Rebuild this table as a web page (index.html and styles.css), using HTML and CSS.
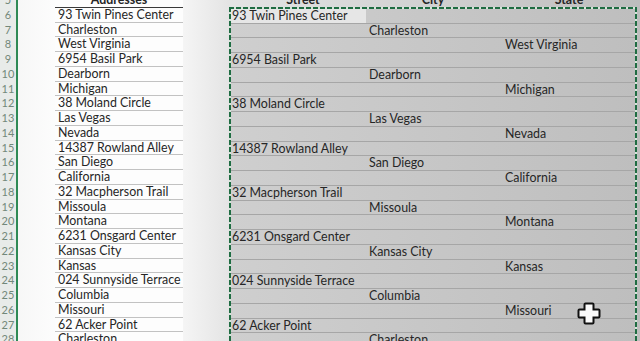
FILE: index.html
```html
<!DOCTYPE html>
<html>
<head>
<meta charset="utf-8">
<link rel="stylesheet" href="styles.css">
</head>
<body>
<div class="sheet">
  <div class="rownums">
    <div class="rn">5</div>
    <div class="rn">6</div><div class="rn">7</div><div class="rn">8</div><div class="rn">9</div>
    <div class="rn">10</div><div class="rn">11</div><div class="rn">12</div><div class="rn">13</div>
    <div class="rn">14</div><div class="rn">15</div><div class="rn">16</div><div class="rn">17</div>
    <div class="rn">18</div><div class="rn">19</div><div class="rn">20</div><div class="rn">21</div>
    <div class="rn">22</div><div class="rn">23</div><div class="rn">24</div><div class="rn">25</div>
    <div class="rn">26</div><div class="rn">27</div><div class="rn">28</div>
  </div>
  <div class="addr">
    <div class="hd">Addresses</div>
    <div class="ac">93 Twin Pines Center</div>
    <div class="ac">Charleston</div>
    <div class="ac">West Virginia</div>
    <div class="ac">6954 Basil Park</div>
    <div class="ac">Dearborn</div>
    <div class="ac">Michigan</div>
    <div class="ac">38 Moland Circle</div>
    <div class="ac">Las Vegas</div>
    <div class="ac">Nevada</div>
    <div class="ac">14387 Rowland Alley</div>
    <div class="ac">San Diego</div>
    <div class="ac">California</div>
    <div class="ac">32 Macpherson Trail</div>
    <div class="ac">Missoula</div>
    <div class="ac">Montana</div>
    <div class="ac">6231 Onsgard Center</div>
    <div class="ac">Kansas City</div>
    <div class="ac">Kansas</div>
    <div class="ac">024 Sunnyside Terrace</div>
    <div class="ac">Columbia</div>
    <div class="ac">Missouri</div>
    <div class="ac">62 Acker Point</div>
    <div class="ac">Charleston</div>
  </div>
  <div class="selwrap">
    <div class="shd">
      <div class="h street">Street</div>
      <div class="h">City</div>
      <div class="h">State</div>
    </div>
    <div class="sel">
      <div class="sr"><div class="c active">93 Twin Pines Center</div><div class="c"></div><div class="c"></div></div>
      <div class="sr"><div class="c"></div><div class="c">Charleston</div><div class="c"></div></div>
      <div class="sr"><div class="c"></div><div class="c"></div><div class="c">West Virginia</div></div>
      <div class="sr"><div class="c">6954 Basil Park</div><div class="c"></div><div class="c"></div></div>
      <div class="sr"><div class="c"></div><div class="c">Dearborn</div><div class="c"></div></div>
      <div class="sr"><div class="c"></div><div class="c"></div><div class="c">Michigan</div></div>
      <div class="sr"><div class="c">38 Moland Circle</div><div class="c"></div><div class="c"></div></div>
      <div class="sr"><div class="c"></div><div class="c">Las Vegas</div><div class="c"></div></div>
      <div class="sr"><div class="c"></div><div class="c"></div><div class="c">Nevada</div></div>
      <div class="sr"><div class="c">14387 Rowland Alley</div><div class="c"></div><div class="c"></div></div>
      <div class="sr"><div class="c"></div><div class="c">San Diego</div><div class="c"></div></div>
      <div class="sr"><div class="c"></div><div class="c"></div><div class="c">California</div></div>
      <div class="sr"><div class="c">32 Macpherson Trail</div><div class="c"></div><div class="c"></div></div>
      <div class="sr"><div class="c"></div><div class="c">Missoula</div><div class="c"></div></div>
      <div class="sr"><div class="c"></div><div class="c"></div><div class="c">Montana</div></div>
      <div class="sr"><div class="c">6231 Onsgard Center</div><div class="c"></div><div class="c"></div></div>
      <div class="sr"><div class="c"></div><div class="c">Kansas City</div><div class="c"></div></div>
      <div class="sr"><div class="c"></div><div class="c"></div><div class="c">Kansas</div></div>
      <div class="sr"><div class="c">024 Sunnyside Terrace</div><div class="c"></div><div class="c"></div></div>
      <div class="sr"><div class="c"></div><div class="c">Columbia</div><div class="c"></div></div>
      <div class="sr"><div class="c"></div><div class="c"></div><div class="c">Missouri</div></div>
      <div class="sr"><div class="c">62 Acker Point</div><div class="c"></div><div class="c"></div></div>
      <div class="sr"><div class="c"></div><div class="c">Charleston</div><div class="c"></div></div>
    </div>
  </div>
</div>
<svg class="cursor" width="24" height="24" viewBox="0 0 24 24">
  <path d="M8.5 2.5 H15.5 Q16.5 2.5 16.5 3.5 V8.5 H21.5 Q22.5 8.5 22.5 9.5 V15.5 Q22.5 16.5 21.5 16.5 H16.5 V21.5 Q16.5 22.5 15.5 22.5 H8.5 Q7.5 22.5 7.5 21.5 V16.5 H2.5 Q1.5 16.5 1.5 15.5 V9.5 Q1.5 8.5 2.5 8.5 H7.5 V3.5 Q7.5 2.5 8.5 2.5 Z" fill="#fafafa" stroke="#111" stroke-width="2"/>
</svg>
</body>
</html>
```
FILE: styles.css
```css
html, body {
  margin: 0;
  padding: 0;
  width: 640px;
  height: 341px;
  overflow: hidden;
}
body {
  background: linear-gradient(90deg, #f4f5f4 0px, #fdfdfd 60px, #f6f6f6 180px, #e4e4e4 229px, #bdbdbd 640px);
  font-family: Lato, "Open Sans", sans-serif;
  font-size: 12.4px;
  color: #262626;
  position: relative;
}
.sheet {
  display: flex;
  margin-top: -7px;
}
.rownums {
  width: 16px;
  border-right: 2px solid #2f8a55;
  background: #e8ebe9;
  flex: none;
}
.rn {
  height: 14.76px;
  line-height: 14.76px;
  text-align: center;
  font-size: 11px;
  color: #72887a;
  box-sizing: border-box;
}
.addr {
  margin-left: 37px;
  width: 128px;
  flex: none;
  background: #fdfdfd;
}
.hd {
  height: 14.76px;
  line-height: 14px;
  box-sizing: border-box;
  border-bottom: 1px solid #3a3a3a;
  text-align: center;
  font-weight: bold;
}
.ac {
  height: 14.76px;
  line-height: 14px;
  box-sizing: border-box;
  border-bottom: 1px solid #c2c2c2;
  padding-left: 3px;
  white-space: nowrap;
}
.selwrap {
  margin-left: 46px;
  width: 408px;
  flex: none;
}
.shd {
  display: grid;
  grid-template-columns: 136px 136px 136px;
  height: 14.76px;
  line-height: 14px;
  font-weight: bold;
}
.h { text-align: center; }
.h.street { padding-left: 12px; }
.sel {
  padding: 2px;
  margin-top: -1px;
  background:
    repeating-linear-gradient(90deg, #1f6c42 0 5px, #d6e4da 5px 7px) top / 100% 2px no-repeat,
    repeating-linear-gradient(90deg, #1f6c42 0 5px, #d6e4da 5px 7px) bottom / 100% 2px no-repeat,
    repeating-linear-gradient(180deg, #1f6c42 0 5px, #d6e4da 5px 7px) left / 2px 100% no-repeat,
    repeating-linear-gradient(180deg, #1f6c42 0 5px, #d6e4da 5px 7px) right / 2px 100% no-repeat,
    linear-gradient(90deg, #cfcfcf, #bebebe);
}
.sr {
  display: grid;
  grid-template-columns: 135px 136px 133px;
  height: 14.76px;
  box-sizing: border-box;
  border-bottom: 1px solid #a6a6a6;
  line-height: 14px;
}
.c {
  padding-left: 3px;
  white-space: nowrap;
}
.sr .c:first-child { padding-left: 1px; }
.c.active {
  background: #e6e6e6;
}
.cursor {
  position: absolute;
  left: 577px;
  top: 301px;
}
```
